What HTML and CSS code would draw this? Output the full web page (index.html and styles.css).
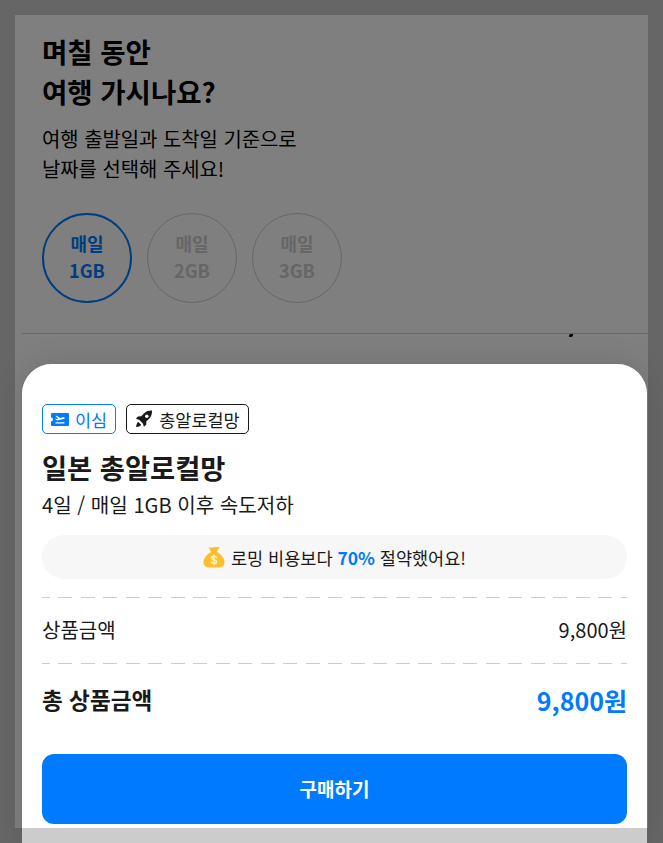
FILE: index.html
```html
<!DOCTYPE html>
<html lang="ko">

<head>
    <meta charset="UTF-8">
    <title>구매하기</title>
    <link rel="stylesheet" href="styles.css">
</head>

<body>
    <!-- 뒤 화면 -->
    <main class="page">
        <h1 class="page-title">며칠 동안<br>여행 가시나요?</h1>
        <p class="page-desc">여행 출발일과 도착일 기준으로<br>날짜를 선택해 주세요!</p>
        <div class="plans">
            <div class="plan plan-on">매일<br>1GB</div>
            <div class="plan">매일<br>2GB</div>
            <div class="plan">매일<br>3GB</div>
        </div>
        <div class="page-line"></div>
        <div class="speck"></div>
    </main>

    <div class="scrim"></div>

    <!-- 구매 시트 -->
    <section class="sheet">
        <div class="sheet-body">
            <div class="tags">
                <span class="tag tag-blue">
                    <svg class="tag-icon" viewBox="0 0 18 13" width="18" height="13">
                        <path fill="#007aff" d="M1 0h16a1 1 0 0 1 1 1v11a1 1 0 0 1-1 1H1a1 1 0 0 1-1-1V8.500a2 2 0 0 0 0-4V1a1 1 0 0 1 1-1z" />
                        <path fill="#fff" d="M4.500 3l1.200-.3 3.300 2.300 3-.8c.9-.2 1.700.1 1.800.6.100.5-.3.900-1.100 1.100L6 7.600 4 5.700l.9-.3 1 .7 1.400-.5zM4.500 9.300h9v1.100h-9z" />
                    </svg>
                    이심
                </span>
                <span class="tag tag-dark">
                    <svg class="tag-icon" viewBox="0 0 18 18" width="18" height="18">
                        <path fill="#1a1a1a" d="M17.400.6c-3.600-.3-6.700.9-9 3.300L6.300 6.200l-3.400.2L.9 8.700l3.200 1 3.800 3.800 1 3.200 2.300-2 .2-3.400 2.300-2.100c2.400-2.300 3.600-5.400 3.300-9z" />
                        <circle fill="#fff" cx="11.800" cy="6.200" r="1.700" />
                        <path fill="#1a1a1a" d="M3.400 12c-1.200.4-2 1.700-2.300 5 3.300-.3 4.600-1.100 5-2.300z" />
                    </svg>
                    총알로컬망
                </span>
            </div>
            <h2 class="sheet-title">일본 총알로컬망</h2>
            <p class="sheet-sub">4일 / 매일 1GB 이후 속도저하</p>
            <div class="save">
                <svg viewBox="0 0 22 22" width="22" height="22">
                    <path fill="#fbc02d" d="M5.500 1c1.600.9 3 .9 5.500.3 2.500-.6 3.900-.5 5.500-.1L13.800 6.300H8.200z" />
                    <path fill="#fbc02d" d="M8.200 5.800h5.600c4 2.200 7.700 6.500 7.700 10.400 0 3.700-2.600 5.300-5.900 5.300H6.400c-3.300 0-5.900-1.600-5.900-5.300 0-3.900 3.700-8.200 7.700-10.400z" />
                    <path fill="none" stroke="#fff3c4" stroke-width="1.400" stroke-linecap="round" d="M13.500 11.300c-.5-.8-1.400-1.200-2.500-1.200-1.400 0-2.400.7-2.400 1.800 0 2.600 5 1.200 5 3.800 0 1.200-1.100 1.800-2.600 1.800-1.200 0-2.200-.4-2.700-1.300M11 8.800v10" />
                </svg>
                <span>로밍 비용보다 <b>70%</b> 절약했어요!</span>
            </div>
            <div class="dash"></div>
            <div class="row">
                <span>상품금액</span>
                <span>9,800원</span>
            </div>
            <div class="dash"></div>
            <div class="row row-total">
                <span>총 상품금액</span>
                <span class="total-price">9,800원</span>
            </div>
            <button class="buy" type="button">구매하기</button>
        </div>
    </section>
</body>

</html>
```

FILE: styles.css
```css
* {
    box-sizing: border-box;
}

html,
body {
    height: 100%;
}

body {
    margin: 0;
    padding: 15px;
    background-color: #ccc;
    font-family: "Noto Sans CJK KR", "Noto Sans", sans-serif;
    color: #000;
    overflow: hidden;
    position: relative;
}

.page {
    height: 813px;
    background-color: #fff;
    padding: 16px 0 0 27px;
}

.page-title {
    margin: 0;
    font-size: 27.5px;
    font-weight: 700;
    line-height: 40px;
}

.page-desc {
    margin: 13px 0 0;
    font-size: 19.9px;
    line-height: 30px;
}

.plans {
    display: flex;
    gap: 15px;
    margin-top: 29px;
}

.plan {
    width: 90px;
    height: 90px;
    padding-bottom: 2px;
    border: 1px solid #ccc;
    border-radius: 50%;
    display: flex;
    align-items: center;
    justify-content: center;
    text-align: center;
    font-size: 18px;
    font-weight: 700;
    line-height: 27px;
    color: #ccc;
}

.plan-on {
    border: 2px solid #007aff;
    color: #007aff;
}

.page-line {
    height: 1px;
    margin: 30px 0 0 -20px;
    background-color: #ccc;
}

.speck {
    width: 4px;
    height: 3px;
    margin: 0 0 0 527px;
    background-color: #000;
    border-radius: 2px 0 2px 0;
}

.scrim {
    position: absolute;
    inset: 0;
    background-color: rgba(0, 0, 0, 0.5);
}

.sheet {
    position: absolute;
    left: 22px;
    right: 16px;
    top: 364px;
    bottom: 0;
    background-color: #ccc;
    border-radius: 30px 30px 0 0;
    box-shadow: 0 0 30px rgba(0, 0, 0, 0.12);
}

.sheet-body {
    height: 464px;
    padding: 40px 20px 0;
    background-color: #fff;
    border-radius: 30px 30px 0 0;
}

.tags {
    display: flex;
    gap: 10px;
}

.tag {
    display: flex;
    align-items: center;
    gap: 6px;
    height: 30px;
    padding: 0 8px;
    border: 1px solid #000;
    border-radius: 5px;
    font-size: 17.5px;
    color: #1a1a1a;
}

.tag-blue {
    border-color: #007aff;
    color: #007aff;
}

.tag-dark {
    border-color: #1a1a1a;
}

.sheet-title {
    margin: 13px 0 0;
    font-size: 27.3px;
    font-weight: 700;
    line-height: 40px;
    color: #1a1a1a;
}

.sheet-sub {
    margin: 3px 0 0;
    font-size: 20.1px;
    line-height: 30px;
    color: #1a1a1a;
}

.save {
    display: flex;
    align-items: center;
    justify-content: center;
    gap: 6px;
    height: 44px;
    margin-top: 15px;
    border-radius: 22px;
    background-color: #f7f7f7;
    font-size: 17.5px;
    color: #1a1a1a;
}

.save b {
    color: #007aff;
}

.dash {
    height: 1px;
    margin-top: 18px;
    background-image: repeating-linear-gradient(to right, #ccc 0, #ccc 14px, transparent 14px, transparent 22.5px);
    background-position: -6px 0;
}

.row {
    display: flex;
    justify-content: space-between;
    align-items: center;
    height: 65px;
    padding-bottom: 2px;
    font-size: 20px;
    color: #1a1a1a;
}

.row + .dash {
    margin-top: 0;
}

.row-total {
    height: 74px;
    padding-bottom: 3px;
    font-size: 22.6px;
    font-weight: 700;
}

.total-price {
    font-size: 25px;
    color: #007aff;
}

.buy {
    display: block;
    width: 100%;
    height: 70px;
    margin-top: 16px;
    padding-bottom: 3px;
    border: none;
    border-radius: 12px;
    background-color: #007aff;
    color: #fff;
    font-family: inherit;
    font-size: 19px;
    font-weight: 700;
    cursor: pointer;
}
```
